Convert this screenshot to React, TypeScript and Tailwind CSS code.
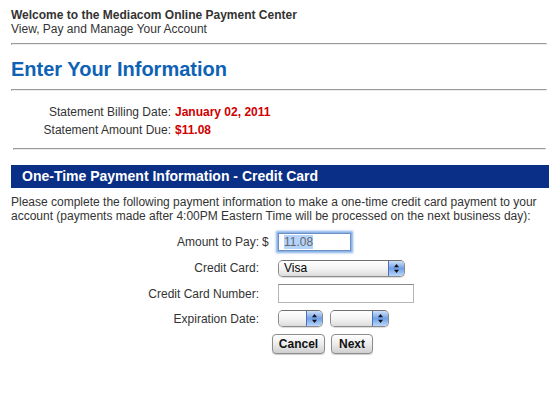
import React from 'react'

function Rule({ className = '' }: { className?: string }) {
  return (
    <div
      className={
        'h-[2px] border-t border-l border-t-[#9a9a9a] border-l-[#9a9a9a] border-b border-r border-b-[#ececec] border-r-[#ececec] ' +
        className
      }
    />
  )
}

function AquaSelect({ width, value }: { width: string; value?: string }) {
  return (
    <div
      className={
        'flex h-[17px] rounded-[5px] border border-[#8a8a8a] border-t-[#6f6f6f] overflow-hidden shadow-[0_1px_1px_rgba(0,0,0,0.15)] ' +
        width
      }
    >
      <div className="flex-1 bg-gradient-to-b from-white via-[#f4f4f4] to-[#dcdcdc] pl-[5px] text-[12px] leading-[15px] text-black">
        {value}
      </div>
      <div className="flex w-[16px] items-center justify-center border-l border-[#4a70b8] bg-gradient-to-b from-[#cfe0f7] via-[#6fa0e6] to-[#b9d6fa]">
        <svg width="7" height="11" viewBox="0 0 7 11">
          <path d="M3.5 1 L6 4.2 L1 4.2 Z" fill="#111" />
          <path d="M3.5 10 L6 6.8 L1 6.8 Z" fill="#111" />
        </svg>
      </div>
    </div>
  )
}

function AquaButton({ label, width }: { label: string; width: string }) {
  return (
    <div
      className={
        'flex h-[20px] items-center justify-center rounded-[4px] border border-[#8c8c8c] bg-gradient-to-b from-white via-[#ececec] to-[#cfcfcf] text-[12px] font-bold text-[#111] shadow-[0_1px_1px_rgba(0,0,0,0.2)] ' +
        width
      }
    >
      {label}
    </div>
  )
}

export default function App() {
  return (
    <main className="w-[557px] h-[410px] bg-white px-[11px] pt-[8px] text-[#333] font-['Liberation_Sans',Arial,sans-serif]">
      <div className="text-[12px] leading-[14px]">
        <div className="font-bold">Welcome to the Mediacom Online Payment Center</div>
        <div>View, Pay and Manage Your Account</div>
      </div>
      <Rule className="mt-[7px] w-[536px]" />

      <h1 className="mt-[12px] text-[20px] leading-[24px] font-bold text-[#0e62b5]">Enter Your Information</h1>
      <Rule className="mt-[8px] w-[536px]" />

      <div className="mt-[12px] text-[12px] leading-[18px]">
        <div className="flex">
          <div className="w-[160px] text-right">Statement Billing Date:</div>
          <div className="ml-[4px] font-bold text-[#d00000]">January 02, 2011</div>
        </div>
        <div className="flex">
          <div className="w-[160px] text-right">Statement Amount Due:</div>
          <div className="ml-[4px] font-bold text-[#d00000]">$11.08</div>
        </div>
      </div>
      <Rule className="mt-[9px] ml-[2px] w-[533px]" />

      <div className="mt-[15px] h-[23px] w-[538px] bg-[#0a2f86] pl-[11px] text-[14px] leading-[23px] font-bold text-white">
        One-Time Payment Information - Credit Card
      </div>

      <p className="mt-[7px] text-[12px] leading-[14px]">
        Please complete the following payment information to make a one-time credit card payment to your account
        (payments made after 4:00PM Eastern Time will be processed on the next business day):
      </p>

      <div className="mt-[5px] grid grid-cols-[248px_19px_auto] text-[12px]">
        <div className="flex h-[27px] items-center justify-end">Amount to Pay:</div>
        <div className="flex h-[27px] items-center pl-[3px]">$</div>
        <div className="flex h-[27px] items-center">
          <div className="h-[18px] w-[73px] border border-[#6d8fc4] shadow-[0_0_2px_2px_rgba(91,150,225,0.75)] pl-[5px] leading-[16px]">
            <span className="bg-[#b4d4fc] text-[#666]">11.08</span>
          </div>
        </div>

        <div className="flex h-[26px] items-center justify-end">Credit Card:</div>
        <div />
        <div className="flex h-[26px] items-center">
          <AquaSelect width="w-[127px]" value="Visa" />
        </div>

        <div className="flex h-[25px] items-center justify-end">Credit Card Number:</div>
        <div />
        <div className="flex h-[25px] items-center">
          <div className="h-[19px] w-[136px] border border-[#b5b5b5] border-t-[#8a8a8a] bg-white" />
        </div>

        <div className="flex h-[25px] items-center justify-end">Expiration Date:</div>
        <div />
        <div className="flex h-[25px] items-center gap-[7px]">
          <AquaSelect width="w-[45px]" />
          <AquaSelect width="w-[59px]" />
        </div>
      </div>

      <div className="flex h-[26px] items-center gap-[6px] pl-[261px]">
        <AquaButton label="Cancel" width="w-[53px]" />
        <AquaButton label="Next" width="w-[42px]" />
      </div>
    </main>
  )
}
